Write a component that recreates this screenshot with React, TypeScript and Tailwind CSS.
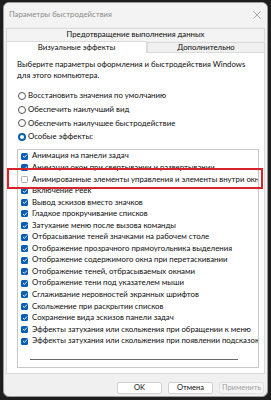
import React from "react";

const items: { label: string; checked: boolean }[] = [
  { label: "Анимация на панели задач", checked: true },
  { label: "Анимация окон при свертывании и развертывании", checked: true },
  { label: "Анимированные элементы управления и элементы внутри окна", checked: false },
  { label: "Включение Peek", checked: true },
  { label: "Вывод эскизов вместо значков", checked: true },
  { label: "Гладкое прокручивание списков", checked: true },
  { label: "Затухание меню после вызова команды", checked: true },
  { label: "Отбрасывание теней значками на рабочем столе", checked: true },
  { label: "Отображение прозрачного прямоугольника выделения", checked: true },
  { label: "Отображение содержимого окна при перетаскивании", checked: true },
  { label: "Отображение теней, отбрасываемых окнами", checked: true },
  { label: "Отображение тени под указателем мыши", checked: true },
  { label: "Сглаживание неровностей экранных шрифтов", checked: true },
  { label: "Скольжение при раскрытии списков", checked: true },
  { label: "Сохранение вида эскизов панели задач", checked: true },
  { label: "Эффекты затухания или скольжения при обращении к меню", checked: true },
  { label: "Эффекты затухания или скольжения при появлении подсказок", checked: true },
];

function Check({ checked }: { checked: boolean }) {
  if (!checked)
    return <div className="w-[7px] h-[7px] shrink-0 rounded-[1.5px] border border-[#a8a8a8] bg-white" />;
  return (
    <div className="w-[7px] h-[7px] shrink-0 rounded-[1.5px] bg-[#0a5fb4] flex items-center justify-center">
      <svg width="6" height="6" viewBox="0 0 6 6">
        <path d="M1 3.1 L2.4 4.4 L5 1.6" fill="none" stroke="white" strokeWidth="0.9" />
      </svg>
    </div>
  );
}

function Radio({ label, selected }: { label: string; selected?: boolean }) {
  return (
    <div className="h-[13.8px] flex items-center gap-[2px] whitespace-nowrap">
      {selected ? (
        <div className="w-[8px] h-[8px] rounded-full bg-[#0a5fb4] flex items-center justify-center shrink-0">
          <div className="w-[4px] h-[4px] rounded-full bg-white" />
        </div>
      ) : (
        <div className="w-[8px] h-[8px] rounded-full border border-[#555] bg-white shrink-0" />
      )}
      <span>{label}</span>
    </div>
  );
}

export default function App() {
  return (
    <div
      className="w-[271px] h-[400px] bg-[#1e1e1e] overflow-hidden pt-[2px] pl-[3px] text-[#0c0c0c]"
      style={{ fontFamily: 'Lato, "Noto Sans", sans-serif' }}
    >
      <div className="relative w-[265px] h-[395px] bg-[#f0f0f0] rounded-[6px] border border-[#9c9c9c] flex flex-col overflow-hidden">
        {/* title bar */}
        <div className="h-[23px] shrink-0 flex items-center justify-between pl-[5px] pr-[6px] bg-[#f3f3f3]">
          <span className="text-[7.8px] text-[#8a8a8a]">Параметры быстродействия</span>
          <svg width="8" height="8" viewBox="0 0 8 8">
            <path d="M0.5 0.5 L7.5 7.5 M7.5 0.5 L0.5 7.5" stroke="#9a9a9a" strokeWidth="0.8" />
          </svg>
        </div>
        {/* tabs */}
        <div className="shrink-0 px-[2px] pt-[2px] text-[7.8px]">
          <div className="h-[13px] border border-b-0 border-[#dadada] bg-[#f3f3f3] flex items-center justify-center">
            Предотвращение выполнения данных
          </div>
          <div className="flex h-[12px]">
            <div className="w-[141px] bg-white border border-b-0 border-[#dadada] flex items-center justify-center">
              Визуальные эффекты
            </div>
            <div className="flex-1 mt-[1px] bg-[#f0f0f0] border border-[#dadada] flex items-center justify-center">
              Дополнительно
            </div>
          </div>
        </div>
        {/* panel */}
        <div className="shrink-0 mx-[2px] h-[321px] bg-white border border-t-0 border-[#dadada] pl-[10px] pr-[5px] text-[7.8px]">
          <div className="pt-[6px] leading-[11px] whitespace-nowrap">
            Выберите параметры оформления и быстродействия Windows
            <br />
            для этого компьютера.
          </div>
          <div className="mt-[8px] pl-[1px]">
            <Radio label="Восстановить значения по умолчанию" />
            <Radio label="Обеспечить наилучший вид" />
            <Radio label="Обеспечить наилучшее быстродействие" />
            <Radio label="Особые эффекты:" selected />
          </div>
          <div className="mt-[5px] h-[219px] border border-[#c8c8c8] overflow-hidden relative">
            <div className="pt-[0.3px]">
              {items.map((it) => (
                <div key={it.label} className="h-[11.56px] flex items-center gap-[4px] pl-[3px] whitespace-nowrap">
                  <Check checked={it.checked} />
                  <span>{it.label}</span>
                </div>
              ))}
            </div>
            <div className="absolute left-[12px] top-[209px] w-[208px] h-[1px] bg-[#6a6a6a]" />
          </div>
        </div>
        {/* red highlight */}
        <div className="absolute left-[3px] top-[165px] w-[256px] h-[21px] border-[2.5px] border-[#d8232a]" />
        {/* buttons */}
        <div className="flex justify-end gap-[6px] pr-[3px] mt-[8px] text-[7.5px]">
          <div className="w-[45px] h-[12px] bg-white border border-[#d0d0d0] rounded-[2px] flex items-center justify-center">
            OK
          </div>
          <div className="w-[45px] h-[12px] bg-white border border-[#d0d0d0] rounded-[2px] flex items-center justify-center">
            Отмена
          </div>
          <div className="w-[45px] h-[12px] bg-[#f5f5f5] border border-[#e0e0e0] rounded-[2px] flex items-center justify-center text-[#a0a0a0]">
            Применить
          </div>
        </div>
      </div>
    </div>
  );
}
